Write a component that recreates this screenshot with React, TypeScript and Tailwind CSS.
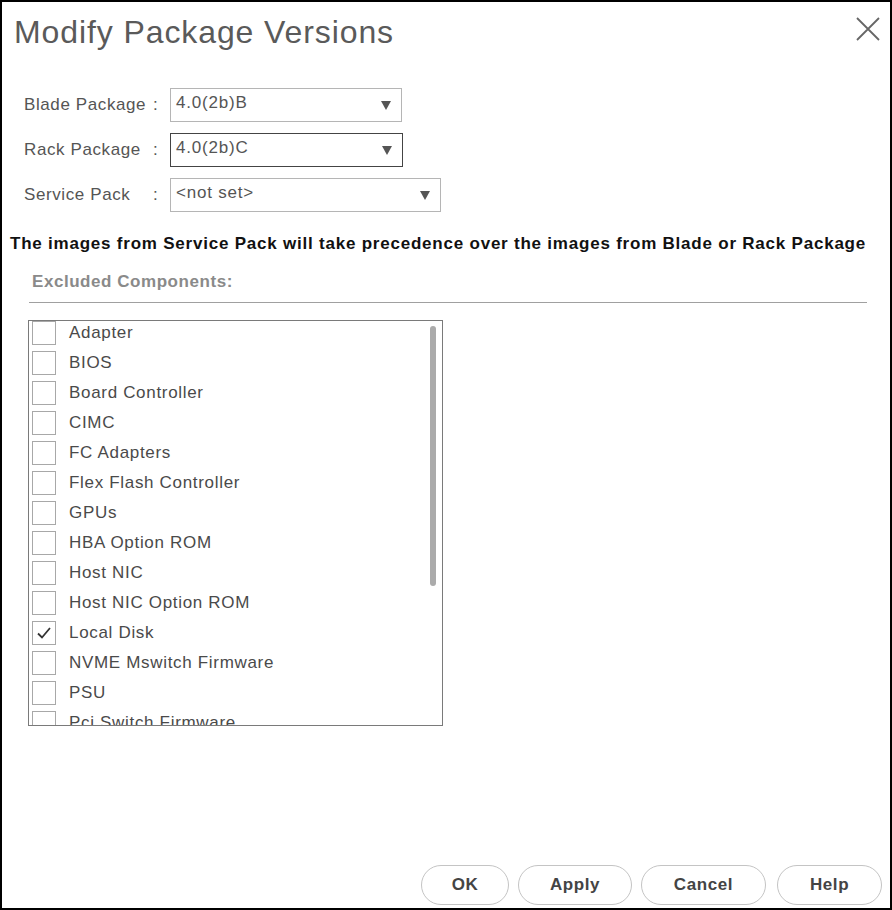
import { useState } from "react";

const components = [
	"Adapter",
	"BIOS",
	"Board Controller",
	"CIMC",
	"FC Adapters",
	"Flex Flash Controller",
	"GPUs",
	"HBA Option ROM",
	"Host NIC",
	"Host NIC Option ROM",
	"Local Disk",
	"NVME Mswitch Firmware",
	"PSU",
	"Pci Switch Firmware",
];

interface SelectRowProps {
	label: string;
	value: string;
	width: string;
	focused?: boolean;
}

function SelectRow({ label, value, width, focused }: SelectRowProps) {
	return (
		<div className="flex h-[34px] items-center">
			<span className="w-[129px] whitespace-nowrap text-[17px] tracking-[0.6px] text-[#555]">{label}</span>
			<span className="w-[17px] text-[17px] text-[#555]">:</span>
			<div
				className={`flex h-[34px] items-start justify-between border pl-[5px] pr-[10px] ${width} ${
					focused ? "border-[#444]" : "border-[#b5b5b5]"
				}`}
			>
				<span className="pt-[4px] text-[17px] leading-[19px] tracking-[0.8px] text-[#555]">{value}</span>
				<svg width="10" height="9" viewBox="0 0 10 9" className="mt-[12px]">
					<path d="M0 0 L10 0 L5 9 Z" fill="#555" />
				</svg>
			</div>
		</div>
	);
}

export default function App() {
	const [checked, setChecked] = useState<string[]>(["Local Disk"]);

	const toggle = (name: string) => {
		setChecked((prev) => (prev.includes(name) ? prev.filter((n) => n !== name) : [...prev, name]));
	};

	return (
		<div className="flex h-[910px] w-[892px] flex-col border-2 border-black bg-white font-['Liberation_Sans',Arial,sans-serif]">
			<div className="flex h-[86px] items-start justify-between">
				<h1 className="ml-[12px] mt-[15px] text-[32px] leading-[31px] font-normal tracking-[0.9px] text-[#5a5a5a]">
					Modify Package Versions
				</h1>
				<svg width="26" height="26" viewBox="0 0 26 26" className="mr-[9px] mt-[14px]">
					<path d="M2 2 L24 24 M24 2 L2 24" stroke="#666" strokeWidth="1.8" />
				</svg>
			</div>

			<div className="ml-[22px] flex flex-col gap-[11px]">
				<SelectRow label="Blade Package" value="4.0(2b)B" width="w-[232px]" />
				<SelectRow label="Rack Package" value="4.0(2b)C" width="w-[233px]" focused />
				<SelectRow label="Service Pack" value="<not set>" width="w-[271px]" />
			</div>

			<p className="ml-[8px] mt-[22px] whitespace-nowrap text-[17px] leading-[20px] font-bold tracking-[0.78px] text-[#111]">
				The images from Service Pack will take precedence over the images from Blade or Rack Package
			</p>

			<p className="ml-[30px] mt-[18px] text-[17px] leading-[20px] font-bold tracking-[0.55px] text-[#8a8a8a]">
				Excluded Components:
			</p>

			<div className="ml-[27px] mt-[10px] h-px w-[838px] bg-[#a0a0a0]" />

			<div className="relative ml-[26px] mt-[17px] h-[406px] w-[415px] overflow-hidden border border-[#7a7a7a]">
				<div className="flex flex-col">
					{components.map((name) => {
						const isChecked = checked.includes(name);
						return (
							<div
								key={name}
								className="flex h-[30px] shrink-0 cursor-pointer items-start"
								onClick={() => toggle(name)}
							>
								<div className="ml-[3px] flex h-[24px] w-[24px] shrink-0 items-center justify-center border border-[#a8a8a8]">
									{isChecked && (
										<svg width="16" height="14" viewBox="0 0 16 14">
											<path d="M2 7.5 L6 11.5 L14 2" fill="none" stroke="#333" strokeWidth="1.8" />
										</svg>
									)}
								</div>
								<span className="ml-[13px] whitespace-nowrap text-[17px] leading-[24px] tracking-[0.68px] text-[#4a4a4a]">
									{name}
								</span>
							</div>
						);
					})}
				</div>
				<div className="absolute right-[6px] top-[5px] h-[260px] w-[6px] rounded-full bg-[#ababab]" />
			</div>

			<div className="mb-[3px] mt-auto flex justify-end pr-[8px]">
				{[
					{ label: "OK", w: "w-[88px]", mr: "mr-[9px]" },
					{ label: "Apply", w: "w-[114px]", mr: "mr-[9px]" },
					{ label: "Cancel", w: "w-[125px]", mr: "mr-[11px]" },
					{ label: "Help", w: "w-[105px]", mr: "" },
				].map((b) => (
					<button
						key={b.label}
						className={`h-[40px] rounded-full border border-[#c4c4c4] bg-white text-[17px] font-bold tracking-[0.6px] text-[#444] ${b.w} ${b.mr}`}
					>
						{b.label}
					</button>
				))}
			</div>
		</div>
	);
}
